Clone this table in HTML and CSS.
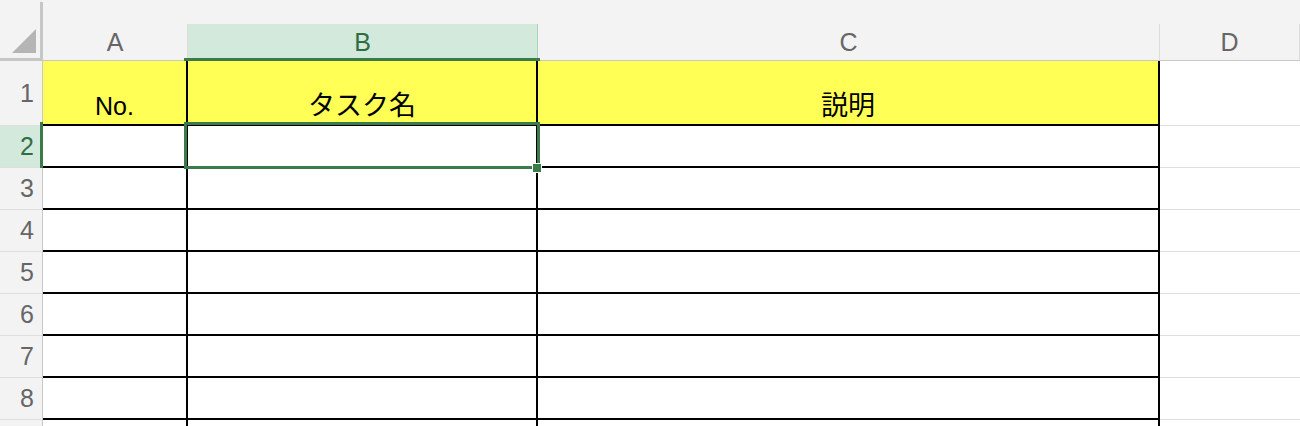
FILE: index.html
```html
<!DOCTYPE html>
<html lang="ja">

<head>
    <meta charset="UTF-8">
    <meta name="viewport" content="width=device-width, initial-scale=1.0">
    <title>タスク一覧</title>

    <link rel="stylesheet" href="styles.css">

</head>

<body>
    <div class="sheet">
        <!-- Column headers -->
        <div class="corner">
            <svg width="40" height="56" viewBox="0 0 40 56">
                <polygon points="12,51 36,51 36,27" fill="#b5b5b5" />
            </svg>
        </div>
        <div class="col-head">A</div>
        <div class="col-head active">B</div>
        <div class="col-head">C</div>
        <div class="col-head">D</div>

        <!-- Row 1: titles -->
        <div class="row-head tall">1</div>
        <div class="cell title">No.</div>
        <div class="cell title"><span class="jp">タスク名</span></div>
        <div class="cell title"><span class="jp">説明</span></div>
        <div class="blank"></div>

        <!-- Row 2 (B2 selected) -->
        <div class="row-head active">2</div>
        <div class="cell"></div>
        <div class="cell selected">
            <div class="selection"></div>
        </div>
        <div class="cell"></div>
        <div class="blank"></div>

        <div class="row-head">3</div>
        <div class="cell"></div>
        <div class="cell"></div>
        <div class="cell"></div>
        <div class="blank"></div>

        <div class="row-head">4</div>
        <div class="cell"></div>
        <div class="cell"></div>
        <div class="cell"></div>
        <div class="blank"></div>

        <div class="row-head">5</div>
        <div class="cell"></div>
        <div class="cell"></div>
        <div class="cell"></div>
        <div class="blank"></div>

        <div class="row-head">6</div>
        <div class="cell"></div>
        <div class="cell"></div>
        <div class="cell"></div>
        <div class="blank"></div>

        <div class="row-head">7</div>
        <div class="cell"></div>
        <div class="cell"></div>
        <div class="cell"></div>
        <div class="blank"></div>

        <div class="row-head">8</div>
        <div class="cell"></div>
        <div class="cell"></div>
        <div class="cell"></div>
        <div class="blank"></div>

        <div class="row-head"></div>
        <div class="cell"></div>
        <div class="cell"></div>
        <div class="cell"></div>
        <div class="blank"></div>
    </div>
</body>

</html>
```

FILE: styles.css
```css
* {
    box-sizing: border-box;
}

body {
    margin: 0;
    background: #f3f3f3;
    font-family: 'Liberation Sans', 'Noto Sans CJK JP', sans-serif;
    overflow: hidden;
}

/* Grid */
.sheet {
    display: grid;
    grid-template-columns: 43px 145px 350px 622px 1fr;
    grid-template-rows: 61px 65px repeat(8, 42px);
    width: 1300px;
}

/* Corner */
.corner {
    margin-top: 2px;
    border-right: 3px solid #c6c6c6;
    border-bottom: 3px solid #c6c6c6;
}

.corner svg {
    display: block;
}

/* Column headers */
.col-head {
    margin-top: 24px;
    display: flex;
    align-items: center;
    justify-content: center;
    font-size: 25px;
    color: #666;
    border-right: 1px solid #dcdcdc;
    border-bottom: 1px solid #c8c8c8;
}

.col-head.active {
    position: relative;
    background: #d3e9dc;
    color: #2f6e45;
    border-right-color: #a9d3b8;
}

.col-head.active::after {
    content: "";
    position: absolute;
    left: -4px;
    right: -3px;
    bottom: -1px;
    height: 3px;
    background: #3b7a4b;
}

/* Row headers */
.row-head {
    display: flex;
    align-items: center;
    justify-content: flex-end;
    padding-right: 8px;
    font-size: 25px;
    color: #666;
    border-right: 1px solid #c8c8c8;
    border-bottom: 1px solid #dedede;
}

.row-head.active {
    position: relative;
    background: #d3e9dc;
    color: #2f6e45;
}

.row-head.active::after {
    content: "";
    position: absolute;
    top: -4px;
    bottom: -1px;
    right: -1px;
    width: 3px;
    background: #3b7a4b;
}

/* Cells */
.cell {
    background: #fff;
    border-right: 2px solid #000;
    border-bottom: 2px solid #000;
}

.cell.title {
    background: #ffff55;
    padding-top: 30px;
    line-height: 30px;
    text-align: center;
    font-size: 25px;
    color: #000;
}

.jp {
    font-family: 'Noto Sans CJK JP', sans-serif;
    font-size: 27px;
    line-height: 20px;
}

.blank {
    background: #fff;
    border-bottom: 1px solid #dedede;
}

/* Selected cell B2 */
.cell.selected {
    position: relative;
}

.selection {
    position: absolute;
    top: -4px;
    left: -4px;
    right: -4px;
    bottom: -3px;
    border: 3px solid #3b7a4b;
    z-index: 2;
}

.selection::after {
    content: "";
    position: absolute;
    right: -5px;
    bottom: -7px;
    width: 8px;
    height: 8px;
    background: #3b7a4b;
    border: 1px solid #fff;
    box-sizing: content-box;
}
```
